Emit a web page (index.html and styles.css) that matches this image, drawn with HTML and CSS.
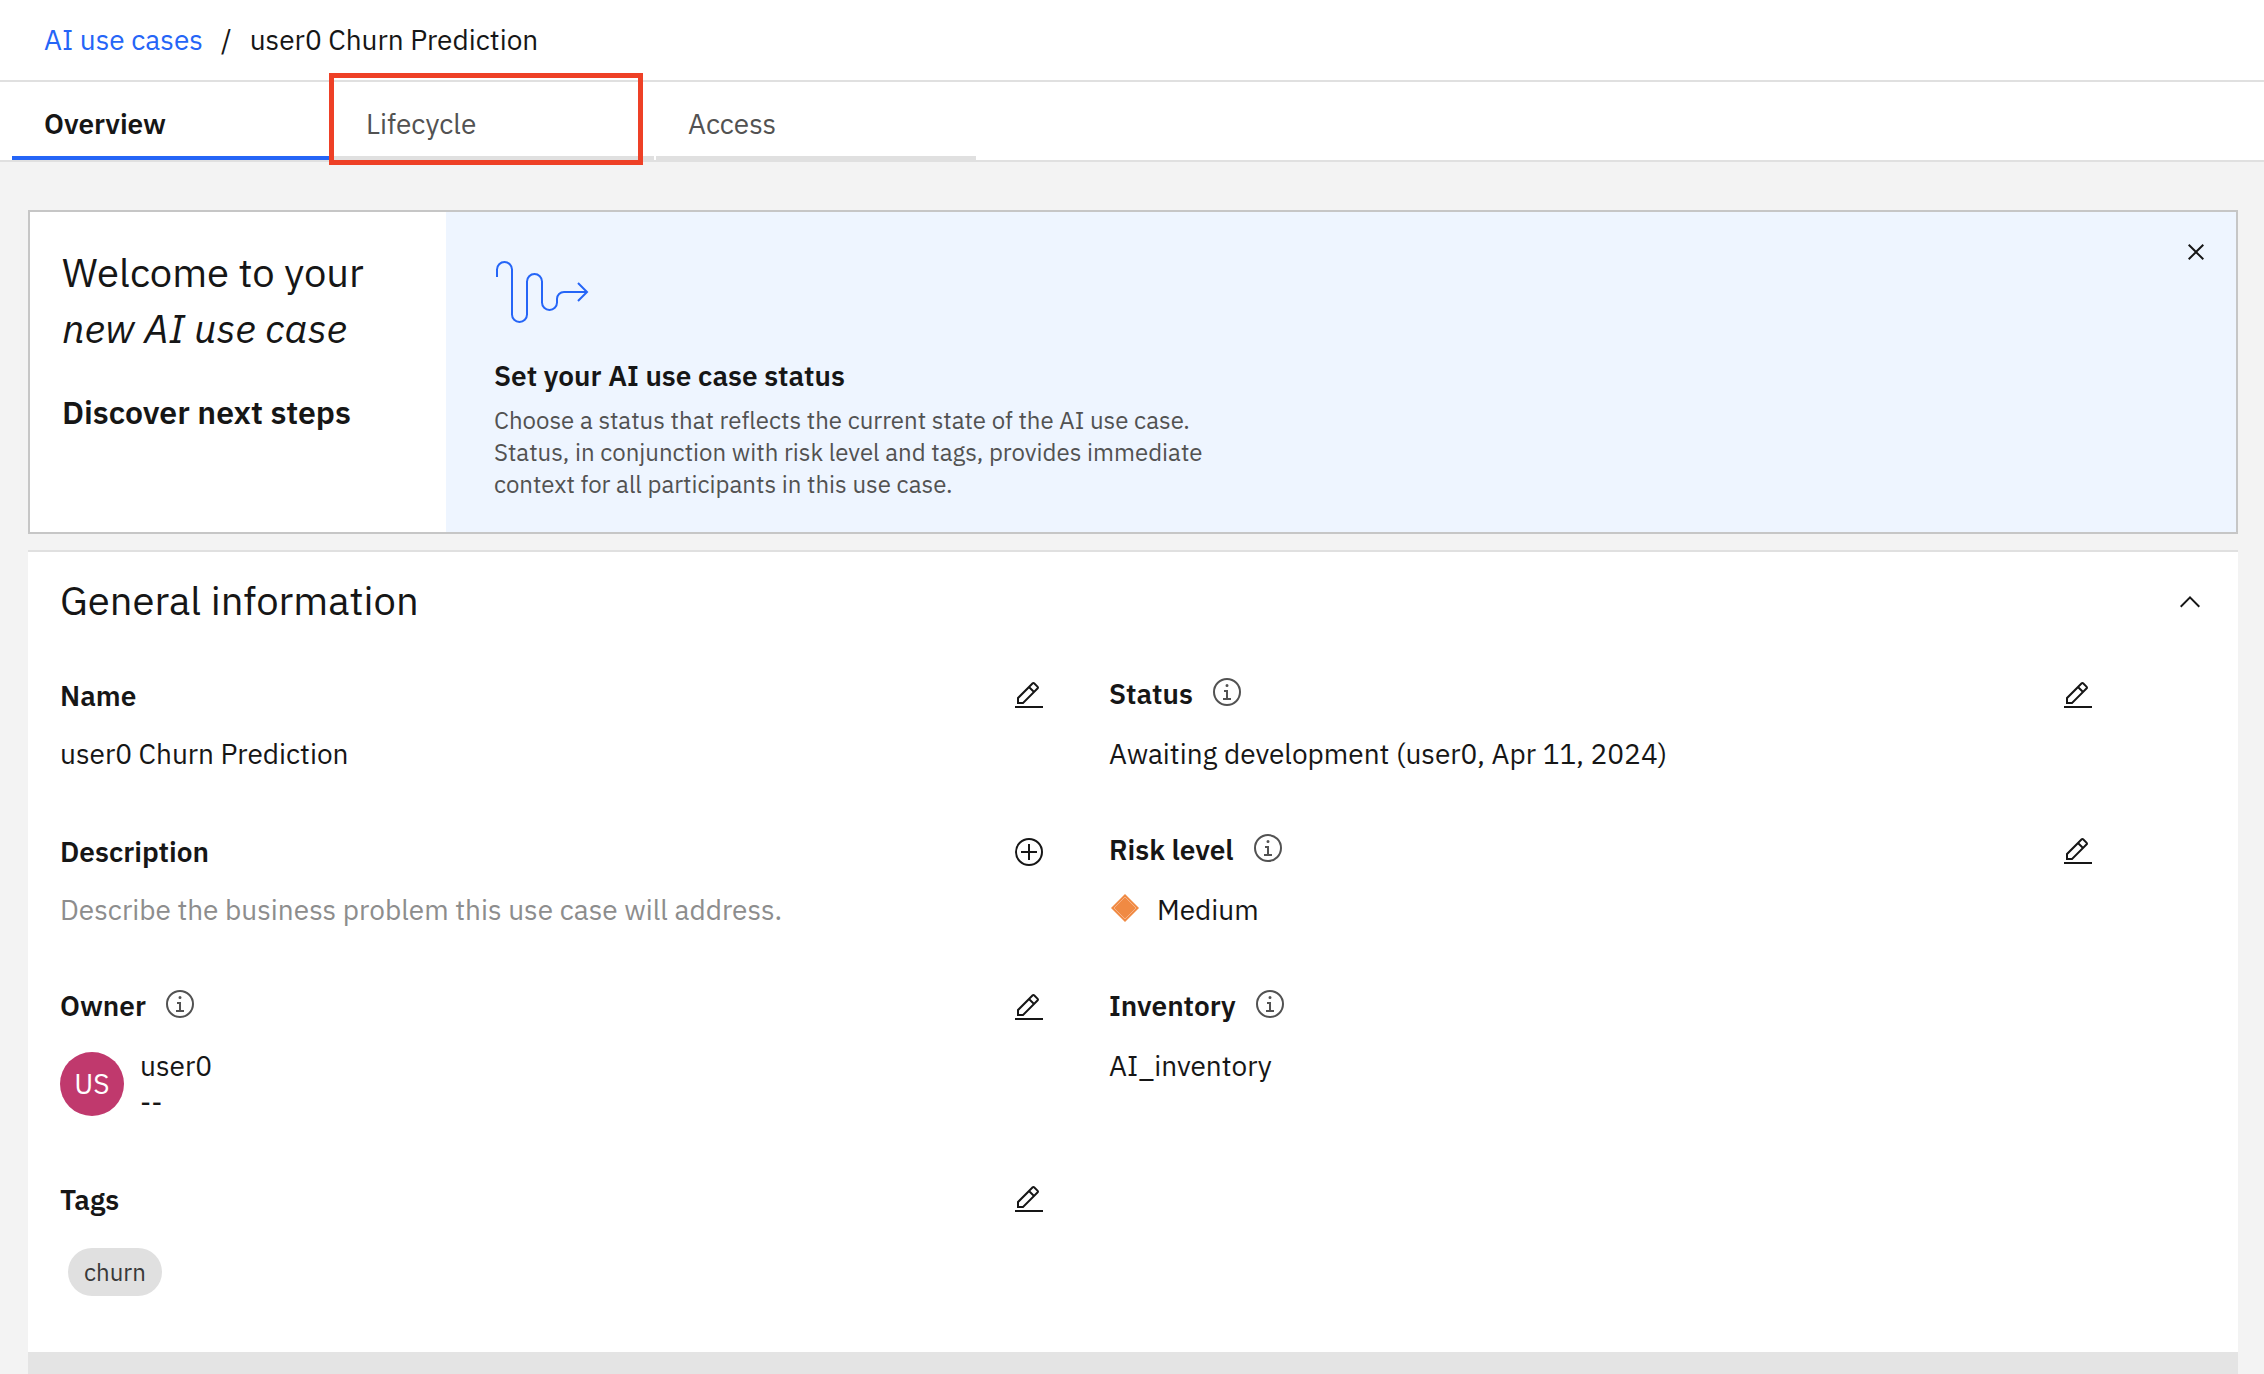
FILE: index.html
```html
<!DOCTYPE html>
<html lang="en">
<head>
<meta charset="utf-8">
<meta name="viewport" content="width=device-width, initial-scale=1">
<title>user0 Churn Prediction</title>
<link rel="stylesheet" href="styles.css">
</head>
<body>
<svg class="sprite" aria-hidden="true">
  <symbol id="edit" viewBox="0 0 32 32"><path d="M2 26H30V28H2zM25.4 9c.8-.8.8-2 0-2.8l-3.6-3.6c-.8-.8-2-.8-2.8 0l-15 15V24h6.400zM20.400 4L24 7.600l-3 3L17.400 7zM6 22v-3.600l10-10 3.600 3.600-10 10z"/></symbol>
  <symbol id="add" viewBox="0 0 32 32"><path d="M16 4a12 12 0 1 1-12 12A12 12 0 0 1 16 4m0-2a14 14 0 1 0 14 14A14 14 0 0 0 16 2zM24 15L17 15 17 8 15 8 15 15 8 15 8 17 15 17 15 24 17 24 17 17 24 17z"/></symbol>
  <symbol id="info" viewBox="0 0 32 32"><path d="M17 22L17 14 13 14 13 16 15 16 15 22 12 22 12 24 20 24 20 22 17 22zM16 8a1.500 1.500 0 1 0 1.500 1.500A1.500 1.500 0 0 0 16 8zM16 30A14 14 0 1 1 30 16 14 14 0 0 1 16 30zM16 4A12 12 0 1 0 28 16 12 12 0 0 0 16 4z"/></symbol>
</svg>

<header class="topbar">
  <nav class="breadcrumb" aria-label="Breadcrumb">
    <a href="#">AI use cases</a>
    <span>/</span>
    <span aria-current="page">user0 Churn Prediction</span>
  </nav>
</header>

<div class="tabs" role="tablist">
  <button class="tab tab-active" role="tab" aria-selected="true">Overview</button>
  <button class="tab tab-marked" role="tab" aria-selected="false">Lifecycle</button>
  <button class="tab" role="tab" aria-selected="false">Access</button>
</div>

<main class="page">
  <section class="banner">
    <div class="banner-intro">
      <h1>Welcome to your<br><em>new AI use case</em></h1>
      <h2>Discover next steps</h2>
    </div>
    <div class="banner-step">
      <div class="step-body">
        <svg class="step-icon" viewBox="0 0 96 64" aria-hidden="true"><path d="M3 17V9.500a7.500 7.500 0 0 1 15 0V54.500a7.500 7.500 0 0 0 15 0V21.500a7.500 7.500 0 0 1 15 0V42.500a7.500 7.500 0 0 0 15 0V39a7 7 0 0 1 7-7H93M84 23l9 9-9 9"/></svg>
        <h3>Set your AI use case status</h3>
        <p>Choose a status that reflects the current state of the AI use case.<br>Status, in conjunction with risk level and tags, provides immediate<br>context for all participants in this use case.</p>
      </div>
      <button class="icon-button" aria-label="Close">
        <svg class="icon" viewBox="0 0 32 32"><path d="M24 9.400L22.600 8 16 14.600 9.400 8 8 9.400 14.600 16 8 22.600 9.400 24 16 17.400 22.600 24 24 22.600 17.400 16z"/></svg>
      </button>
    </div>
  </section>

  <section class="panel">
    <div class="panel-head">
      <h2>General information</h2>
      <button class="icon-button" aria-label="Collapse general information" aria-expanded="true">
        <svg class="icon" viewBox="0 0 32 32"><path d="M16 10L26 20 24.600 21.400 16 12.800 7.400 21.400 6 20z"/></svg>
      </button>
    </div>
    <div class="fields">
      <div class="field">
        <div class="field-head">
          <h3>Name</h3>
          <button class="icon-button" aria-label="Edit name"><svg class="icon"><use href="#edit"/></svg></button>
        </div>
        <p>user0 Churn Prediction</p>
      </div>
      <div class="field">
        <div class="field-head">
          <div class="label"><h3>Status</h3><button class="icon-button info" aria-label="About status"><svg class="icon"><use href="#info"/></svg></button></div>
          <button class="icon-button" aria-label="Edit status"><svg class="icon"><use href="#edit"/></svg></button>
        </div>
        <p>Awaiting development (user0, Apr 11, 2024)</p>
      </div>
      <div class="field">
        <div class="field-head">
          <h3>Description</h3>
          <button class="icon-button" aria-label="Add description"><svg class="icon"><use href="#add"/></svg></button>
        </div>
        <p class="placeholder">Describe the business problem this use case will address.</p>
      </div>
      <div class="field">
        <div class="field-head">
          <div class="label"><h3>Risk level</h3><button class="icon-button info" aria-label="About risk level"><svg class="icon"><use href="#info"/></svg></button></div>
          <button class="icon-button" aria-label="Edit risk level"><svg class="icon"><use href="#edit"/></svg></button>
        </div>
        <div class="risk">
          <svg class="icon" viewBox="0 0 32 32" aria-hidden="true"><path class="risk-fill" d="M16 2L30 16 16 30 2 16z"/><path class="risk-line" d="M16 5L27 16 16 27 5 16z"/></svg>
          <p>Medium</p>
        </div>
      </div>
      <div class="field">
        <div class="field-head">
          <div class="label"><h3>Owner</h3><button class="icon-button info" aria-label="About owner"><svg class="icon"><use href="#info"/></svg></button></div>
          <button class="icon-button" aria-label="Edit owner"><svg class="icon"><use href="#edit"/></svg></button>
        </div>
        <div class="owner">
          <span class="avatar">US</span>
          <p>user0<br>--</p>
        </div>
      </div>
      <div class="field">
        <div class="field-head">
          <div class="label"><h3>Inventory</h3><button class="icon-button info" aria-label="About inventory"><svg class="icon"><use href="#info"/></svg></button></div>
        </div>
        <p>AI_inventory</p>
      </div>
      <div class="field">
        <div class="field-head">
          <h3>Tags</h3>
          <button class="icon-button" aria-label="Edit tags"><svg class="icon"><use href="#edit"/></svg></button>
        </div>
        <span class="tag">churn</span>
      </div>
    </div>
  </section>
  <div class="next-section"></div>
</main>
</body>
</html>
```
FILE: styles.css
```css
*, *::after { box-sizing: border-box; }

body {
  margin: 0;
  min-height: 100vh;
  display: flex;
  flex-direction: column;
  background: #f3f3f3;
  color: #161616;
  font-family: "IBM Plex Sans", Roboto, "Liberation Sans", sans-serif;
  font-size: 28px;
  line-height: 36px;
}

h1, h2, h3, p { margin: 0; font-size: inherit; }
h3 { font-weight: 600; }

button {
  font: inherit;
  color: inherit;
  background: none;
  border: 0;
  padding: 0;
  cursor: pointer;
}

.sprite { position: absolute; width: 0; height: 0; }

.icon { display: block; width: 32px; height: 32px; fill: currentColor; }
.icon-button { flex: none; }
.info { color: #525252; }

/* Breadcrumb and tabs */
.topbar {
  padding: 22px 44px;
  background: #fff;
  border-bottom: 2px solid #e0e0e0;
}
.breadcrumb { display: flex; gap: 18px; }
.breadcrumb a { color: #2565f7; text-decoration: none; }

.tabs {
  display: flex;
  gap: 2px;
  padding-left: 12px;
  background: #fff;
  border-bottom: 2px solid #e0e0e0;
}
.tab {
  position: relative;
  width: 320px;
  padding: 24px 32px 14px;
  border-bottom: 4px solid #e0e0e0;
  color: #525252;
  text-align: left;
}
.tab-active { border-color: #2565f7; color: #161616; font-weight: 600; }
.tab-marked::after {
  content: "";
  position: absolute;
  top: -9px;
  left: -5px;
  width: 314px;
  bottom: -9px;
  border: 5px solid #ee4026;
}

.page {
  flex: 1;
  display: flex;
  flex-direction: column;
  padding: 48px 26px 0 28px;
}

/* Welcome banner */
.banner { display: flex; margin-bottom: 16px; border: 2px solid #c6c6c6; }
.banner-intro { width: 416px; padding: 32px; background: #fff; }
.banner-intro h1 { font-size: 40px; line-height: 56px; font-weight: 400; }
.banner-intro h2 { margin-top: 36px; font-size: 32px; line-height: 40px; font-weight: 600; }
.banner-step {
  flex: 1;
  display: flex;
  justify-content: space-between;
  align-items: flex-start;
  padding: 24px 24px 32px 48px;
  background: #eef5ff;
}
.step-body { padding-top: 24px; }
.step-icon {
  display: block;
  width: 96px;
  height: 64px;
  margin-bottom: 32px;
  fill: none;
  stroke: #2565f7;
  stroke-width: 2px;
}
.step-body h3 { line-height: 40px; }
.step-body p { margin-top: 8px; font-size: 24px; line-height: 32px; color: #525252; }

/* General information */
.panel { background: #fff; border-top: 2px solid #e0e0e0; }
.panel-head {
  display: flex;
  justify-content: space-between;
  align-items: center;
  padding: 20px 32px 44px;
}
.panel-head h2 { padding-bottom: 4px; font-size: 40px; line-height: 56px; font-weight: 400; }

.fields {
  display: grid;
  grid-template-columns: 1fr 1fr;
  gap: 60px 64px;
  padding: 0 144px 56px 32px;
}
.field-head {
  display: flex;
  justify-content: space-between;
  align-items: center;
  height: 40px;
  margin-bottom: 20px;
}
.label { display: flex; align-items: flex-start; gap: 18px; height: 40px; }
.placeholder { color: #8d8d8d; }
.risk { display: flex; gap: 16px; }
.risk-fill { fill: #f08a43; }
.risk-line { fill: none; stroke: #f7b184; stroke-width: 1px; }
.owner { display: flex; gap: 16px; }
.avatar {
  width: 64px;
  height: 64px;
  margin-top: 4px;
  border-radius: 50%;
  background: #c0396d;
  color: #fff;
  line-height: 64px;
  text-align: center;
}
.tag {
  display: inline-block;
  margin: 8px 8px 0;
  padding: 0 16px;
  border-radius: 24px;
  background: #e0e0e0;
  color: #393939;
  font-size: 24px;
  line-height: 48px;
  vertical-align: top;
}

.next-section { flex: 1; min-height: 22px; background: #e4e4e4; }
```
